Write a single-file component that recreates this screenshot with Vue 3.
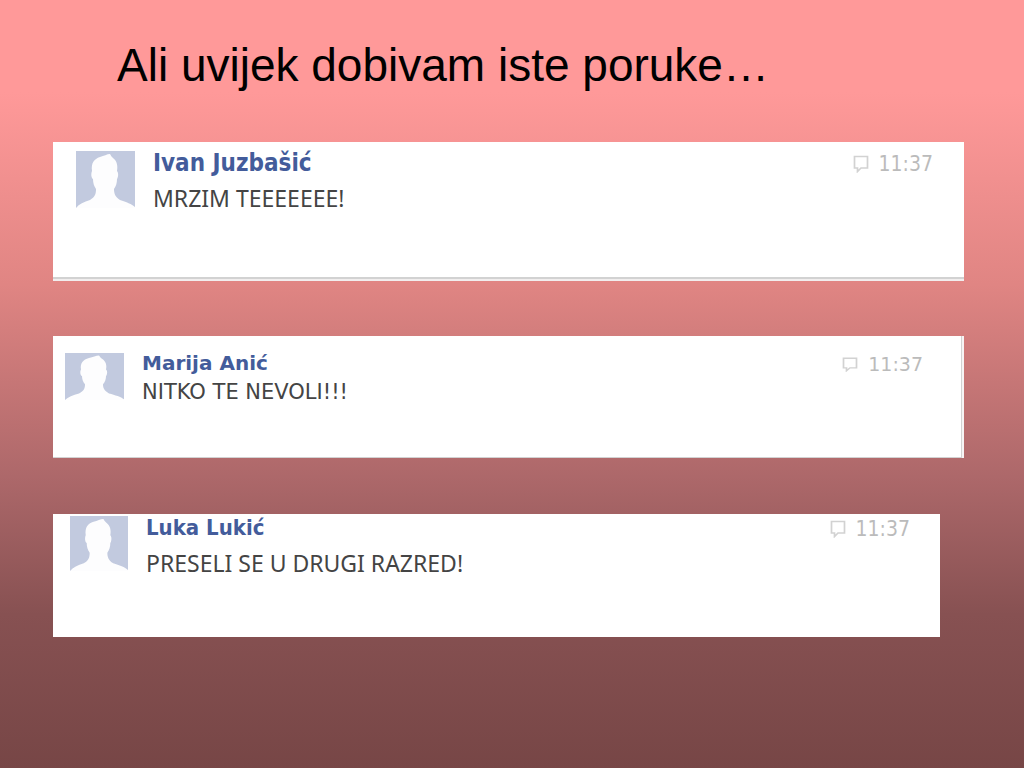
<script setup>
const messages = [
  { id: 'ivan', name: 'Ivan Juzbašić', text: 'MRZIM TEEEEEEE!', time: '11:37' },
  { id: 'marija', name: 'Marija Anić', text: 'NITKO TE NEVOLI!!!', time: '11:37' },
  { id: 'luka', name: 'Luka Lukić', text: 'PRESELI SE U DRUGI RAZRED!', time: '11:37' },
]
</script>

<template>
  <main class="slide">
    <h1 class="title">Ali uvijek dobivam iste poruke…</h1>
    <section class="messages">
      <article v-for="m in messages" :key="m.id" class="card" :class="m.id">
        <svg class="avatar" viewBox="0 0 59 57" preserveAspectRatio="none" aria-hidden="true">
          <rect width="59" height="57" fill="#c2cadf" />
          <path
            d="M0 57C3 53 8 51 14 49C19 46 20 43 20 38C18 35 17 32 17 28C15 27 15 22 16 20C15 12 18 8 24 6C28 5 31 3 34 3C35 5 36 6 37 7C41 10 42 15 41 20C43 22 42 27 41 28C41 32 40 35 38 38C38 42 39 46 44 49C50 51 56 53 59 56V57Z"
            fill="#fdfdfe"
          />
        </svg>
        <div class="body">
          <h2 class="name">{{ m.name }}</h2>
          <p class="text">{{ m.text }}</p>
        </div>
        <div class="meta">
          <svg class="bubble" viewBox="0 0 16 18" preserveAspectRatio="none" aria-hidden="true">
            <path d="M1.5 1.5H14.5V13H8L4.5 16.5V13H1.5Z" fill="none" stroke="#d2d2d2" stroke-width="1.7" />
          </svg>
          <time class="time">{{ m.time }}</time>
        </div>
      </article>
    </section>
  </main>
</template>

<style>
body {
  margin: 0;
}
</style>

<style scoped>
.slide {
  box-sizing: border-box;
  min-height: 100vh;
  padding: 39px 60px 40px 53px;
  background: linear-gradient(#ff9999 0%, #ff9999 12%, #e08583 37%, #ad686a 62%, #875152 80%, #774646 100%);
  font-family: "DejaVu Sans Condensed", "Noto Sans", sans-serif;
}
.title {
  margin: 0 0 51px 64px;
  font: 400 46px/52px "Liberation Sans", Arial, sans-serif;
  color: #000;
}
.messages {
  display: flex;
  flex-direction: column;
  gap: 55px;
}
.card {
  box-sizing: border-box;
  display: flex;
  align-items: flex-start;
  background: #fff;
}
.avatar {
  flex: none;
  width: 59px;
  height: 57px;
}
.body {
  flex: 1;
  margin-left: 18px;
}
.name,
.text {
  margin: 0;
  white-space: nowrap;
}
.name {
  font-size: 24px;
  line-height: 24px;
  font-weight: 700;
  color: #435c9b;
}
.text {
  margin-top: 11px;
  font-family: "Noto Sans", sans-serif;
  font-size: 23px;
  line-height: 24px;
  color: #444;
}
.meta {
  display: flex;
  align-items: center;
  gap: 10px;
  color: #bbb;
}
.bubble {
  width: 16px;
  height: 18px;
}
.time {
  font-size: 21px;
  line-height: 26px;
}
.ivan {
  min-height: 139px;
  padding: 9px 31px 9px 23px;
  box-shadow: inset 0 -2px #f1eeee, inset 0 -4px #d2d2d2;
}
.marija {
  min-height: 122px;
  padding: 17px 41px 17px 12px;
  box-shadow: inset -2px 0 #f7f4f4, inset -3px -1px #d2d2d2;
}
.marija .avatar {
  height: 47px;
}
.marija .name {
  font-family: "DejaVu Sans", sans-serif;
  font-size: 20px;
  line-height: 20px;
}
.marija .text {
  margin-top: 9px;
  font-family: "DejaVu Sans", sans-serif;
  font-size: 21px;
  line-height: 20px;
}
.marija .bubble {
  height: 15px;
}
.marija .time {
  font-family: "DejaVu Sans", sans-serif;
  font-size: 19px;
  line-height: 22px;
}
.luka {
  min-height: 123px;
  margin-top: 1px;
  margin-right: 24px;
  padding: 2px 30px 2px 17px;
}
.luka .avatar {
  width: 58px;
  height: 55px;
}
.luka .name {
  font-size: 22px;
}
</style>
